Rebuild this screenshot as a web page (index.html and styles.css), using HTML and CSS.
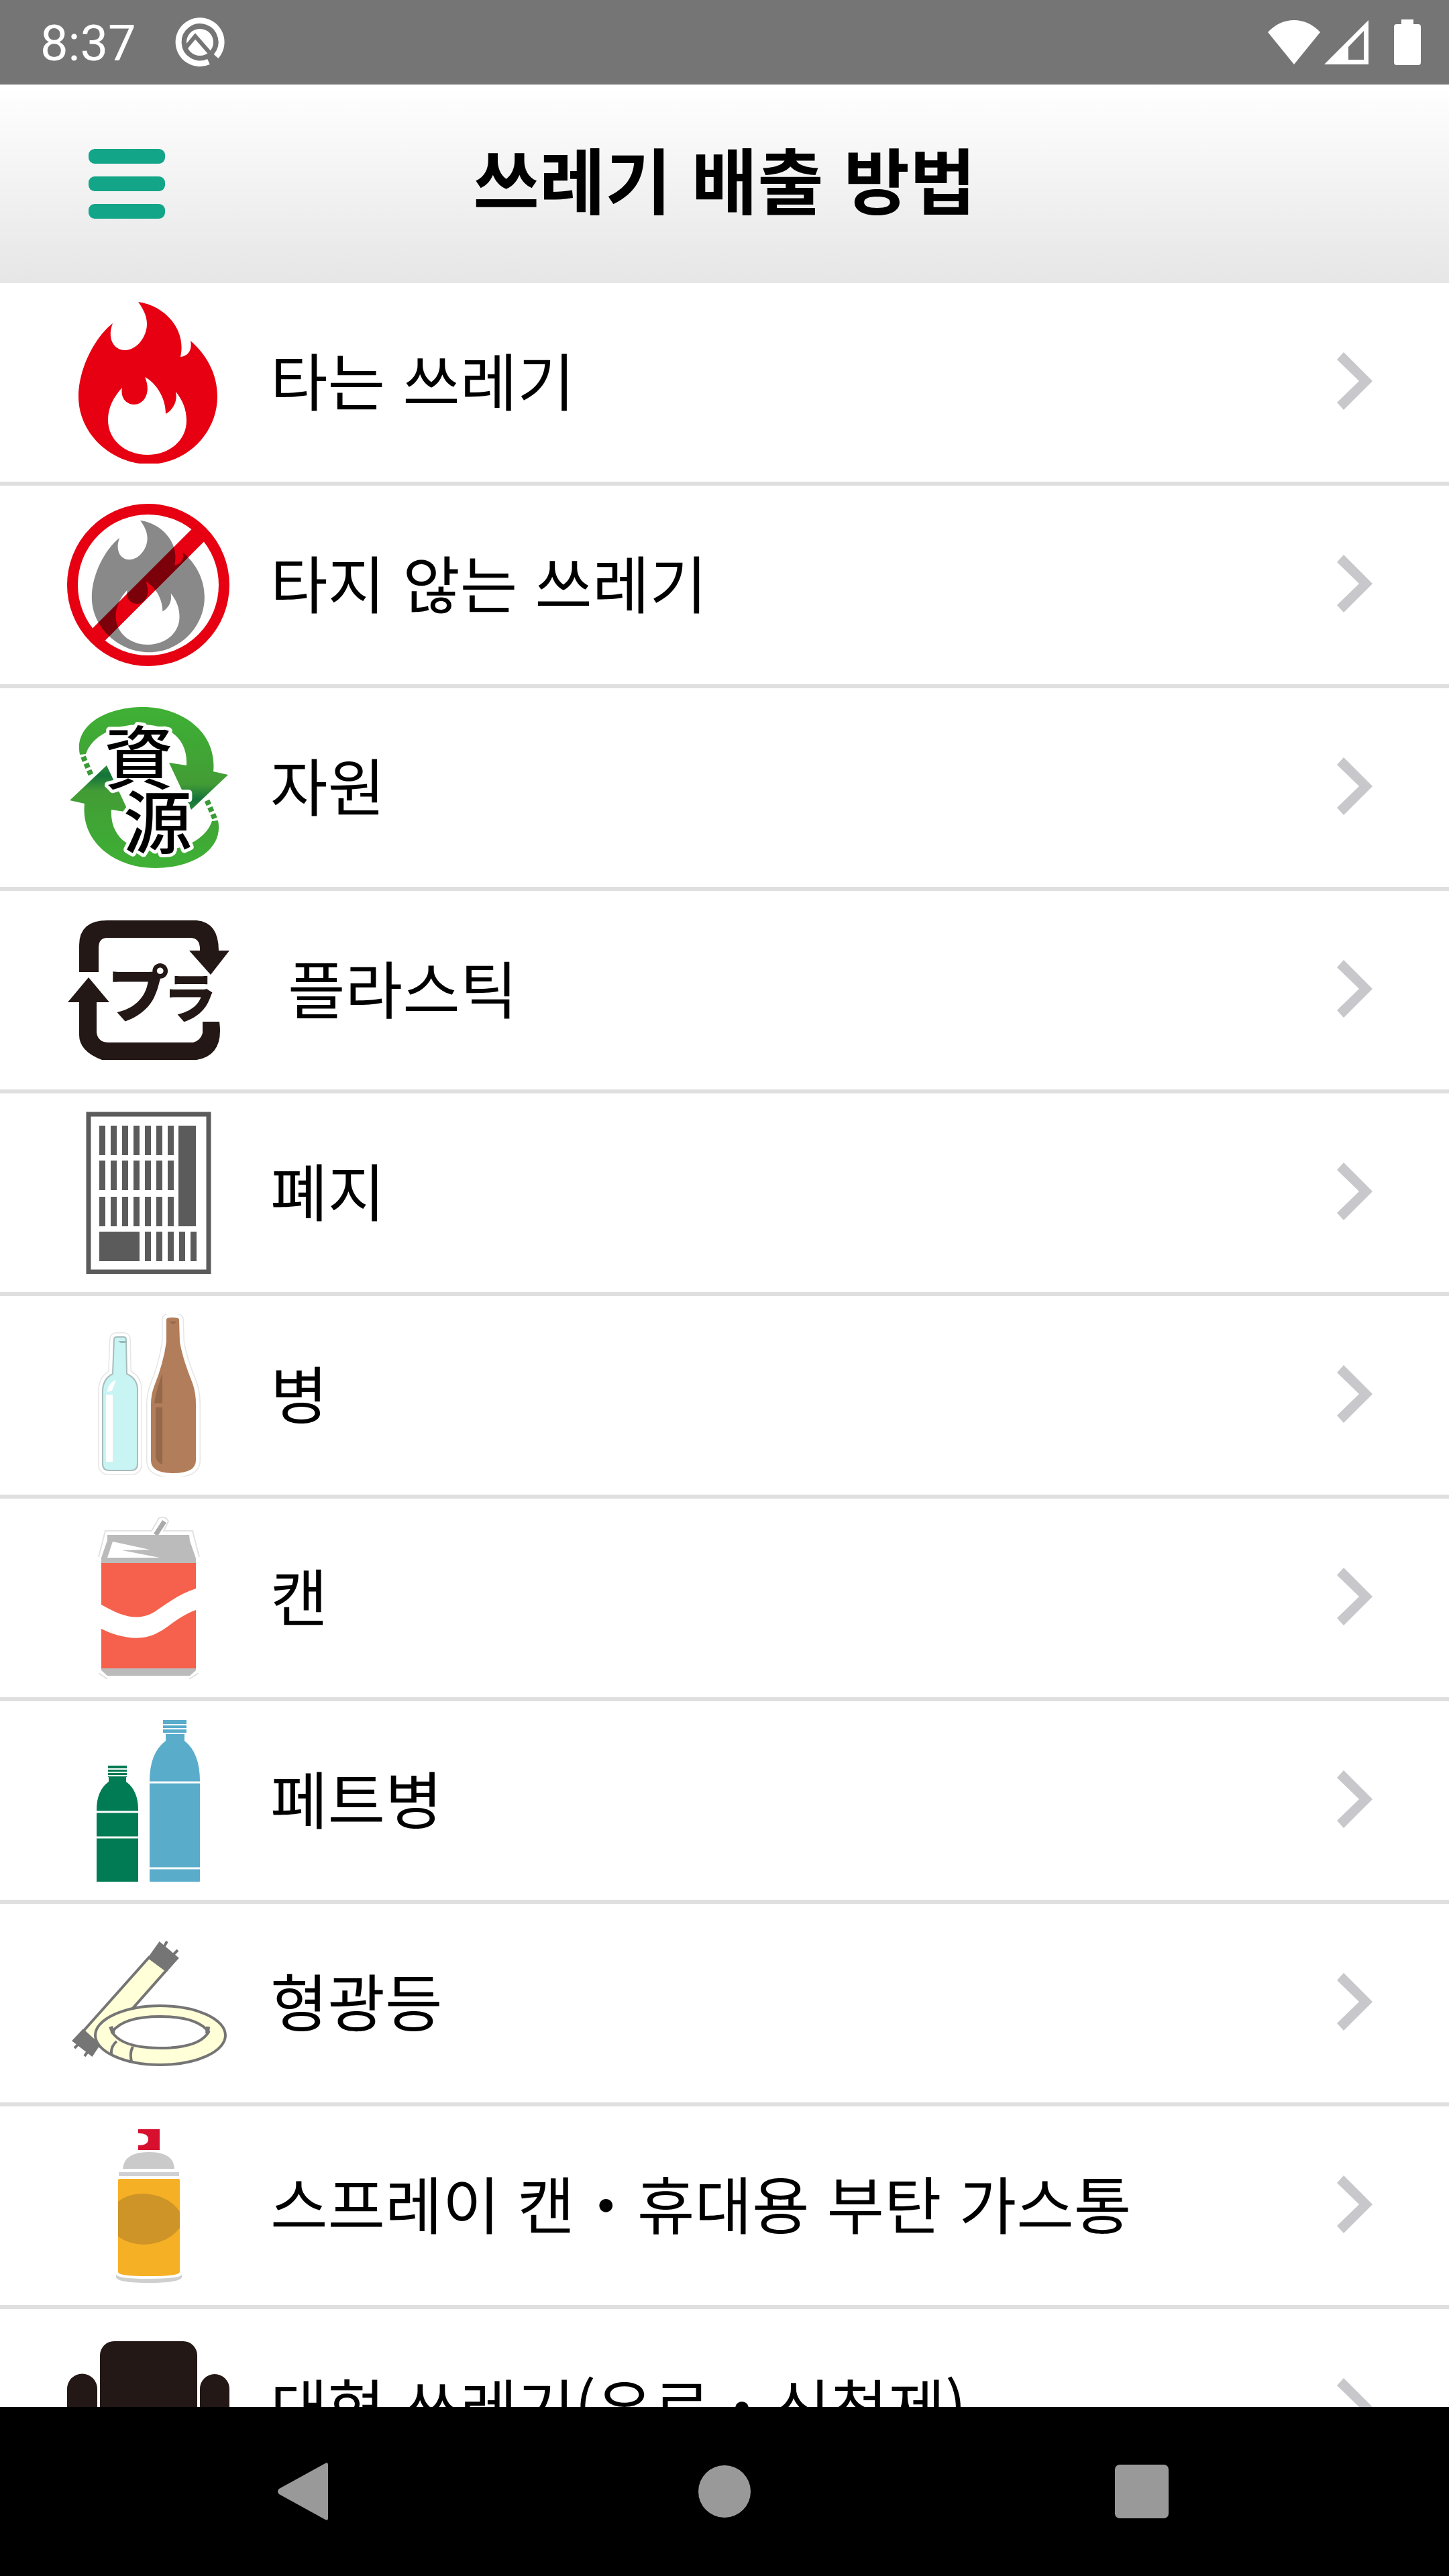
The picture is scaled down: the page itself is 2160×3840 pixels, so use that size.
FILE: index.html
```html
<!DOCTYPE html>
<html lang="ko">

<head>
  <meta charset="UTF-8">
  <meta name="viewport" content="width=device-width, initial-scale=1">
  <title>쓰레기 배출 방법</title>
  <link rel="stylesheet" href="styles.css">
</head>

<body>
  <!-- shared shapes -->
  <svg class="defs" aria-hidden="true">
    <symbol id="chevron" viewBox="0 0 54 86">
      <path d="M10 0L53 43L10 86L0 75L33 43L0 11Z" />
    </symbol>
    <path id="flame" fill-rule="evenodd" d="M106 1C113 11 119 21 119 34C119 53 104 73 86 73C70 73 59 56 68 33C42 53 17 100 17 142C17 199 68 243 122 243C178 243 224 197 224 142C224 108 208 80 184 59C187 73 180 82 169 83C178 43 147 7 106 1Z
      M116 113C131 121 147 142 147 168C158 162 165 149 162 135C172 147 178 161 178 178C178 208 152 229 120 229C87 229 61 207 61 177C61 159 69 143 82 129C79 145 89 154 100 154C115 154 126 136 116 113Z" />
  </svg>

  <div class="app">
    <div class="status-bar">
      <span class="clock">8:37</span>
      <svg class="status-at" viewBox="0 0 76 76">
        <path d="M62 59A32 32 0 1 0 51 67" fill="none" stroke="#fff" stroke-width="9" />
        <circle cx="38" cy="38" r="20" fill="#fff" />
        <path d="M17 46L31 29L59 61" fill="none" stroke="#757575" stroke-width="6" />
      </svg>
      <div class="status-icons">
        <svg class="wifi" viewBox="0 0 78 68">
          <path d="M39 67L0 19C22-5 56-5 78 19Z" fill="#fff" />
        </svg>
        <svg class="signal" viewBox="0 0 66 68">
          <path fill-rule="evenodd" d="M66 1V67H0ZM59 17L36 41V60H59Z" fill="#fff" />
        </svg>
        <svg class="battery" viewBox="0 0 40 68">
          <path d="M11 0H29V7H36Q40 7 40 11V64Q40 68 36 68H4Q0 68 0 64V11Q0 7 4 7H11Z" fill="#fff" />
        </svg>
      </div>
    </div>

    <header class="header">
      <button class="menu-btn" type="button" aria-label="메뉴">
        <span></span>
        <span></span>
        <span></span>
      </button>
      <h1>쓰레기 배출 방법</h1>
    </header>

    <main class="list">
      <a class="row" href="#burnable">
        <svg class="icon" viewBox="0 0 242 242">
          <use href="#flame" fill="#e60012" />
        </svg>
        <span class="label">타는 쓰레기</span>
        <svg class="chevron"><use href="#chevron" /></svg>
      </a>

      <a class="row" href="#non-burnable">
        <svg class="icon" viewBox="0 0 242 242">
          <use href="#flame" fill="#898989" transform="translate(23 24) scale(.812)" />
          <g class="ban" fill="none" stroke="#e60012">
            <circle cx="121" cy="121" r="113" stroke-width="16" />
            <path d="M200 42L42 200" stroke-width="26" />
          </g>
        </svg>
        <span class="label">타지 않는 쓰레기</span>
        <svg class="chevron"><use href="#chevron" /></svg>
      </a>

      <a class="row" href="#resource">
        <svg class="icon" viewBox="0 0 242 242">
          <defs>
            <linearGradient id="leaf" x1="0" y1="0" x2="0" y2="1">
              <stop offset="0" stop-color="#3fb135" />
              <stop offset=".3" stop-color="#3fa935" />
              <stop offset=".75" stop-color="#439c35" />
              <stop offset=".9" stop-color="#13733a" />
              <stop offset="1" stop-color="#2a8a38" />
            </linearGradient>
            <g id="recycle-arrow">
              <path d="M19 72C10 28 58 1 113 1C173 1 224 40 218 97L240 102L185 154L152 84L178 88C180 55 160 27 110 27C68 27 36 46 28 71Z" fill="url(#leaf)" />
              <path d="M24 75L36 103" stroke="#3a9a38" stroke-width="8" stroke-dasharray="7 4" />
            </g>
          </defs>
          <use href="#recycle-arrow" />
          <use href="#recycle-arrow" transform="rotate(180 122 121)" />
          <g class="kanji">
            <text x="107" y="115">資</text>
            <text x="135" y="211">源</text>
          </g>
        </svg>
        <span class="label">자원</span>
        <svg class="chevron"><use href="#chevron" /></svg>
      </a>

      <a class="row" href="#plastic">
        <svg class="icon" viewBox="0 0 242 242" fill="#231815">
          <path d="M18 94V54Q18 17 60 17H193Q226 20 226 62H242L214 98L182 62H198Q199 43 183 43H60Q47 43 47 58V94Z" />
          <path d="M32 102L63 139H44V184Q46 199 62 199H188Q199 196 202 185V168H227Q234 218 193 225H52Q18 212 18 188V139H1Z" />
          <g class="kana">
            <text class="kana-pu" x="60" y="161">プ</text>
            <text class="kana-ra" x="143" y="162">ラ</text>
          </g>
        </svg>
        <span class="label">&nbsp;플라스틱</span>
        <svg class="chevron"><use href="#chevron" /></svg>
      </a>

      <a class="row" href="#paper">
        <svg class="icon" viewBox="0 0 242 242">
          <g fill="none" stroke="#5b5b5b">
            <rect x="32" y="4" width="179" height="235" stroke-width="7" />
            <path d="M48 43H159M48 95H159" stroke-width="44" stroke-dasharray="9 8" />
            <path d="M48 149H159M116 201H193" stroke-width="44" stroke-dasharray="9 8" />
          </g>
          <path d="M166 21H192V171H166ZM48 179H108V223H48Z" fill="#5b5b5b" />
        </svg>
        <span class="label">폐지</span>
        <svg class="chevron"><use href="#chevron" /></svg>
      </a>

      <a class="row" href="#bottle">
        <svg class="icon" viewBox="0 0 242 242">
          <defs>
            <path id="glass-clear" d="M70 38Q70 34 74 34H84Q88 34 88 38L89 89Q105 96 105 113V223Q105 233 95 233H63Q53 233 53 223V113Q54 96 68 89Z" />
            <path id="glass-brown" d="M148 8Q148 5 157 5Q167 5 167 8L168 41Q172 66 187 103Q192 117 192 134V218Q192 237 158 237Q125 237 125 218V134Q125 120 130 107Q144 72 148 41Z" />
          </defs>
          <g fill="#fff" stroke="#e6e6e6" stroke-width="14" stroke-linejoin="round">
            <use href="#glass-clear" />
            <use href="#glass-brown" />
            <g stroke="#fff" stroke-width="11">
              <use href="#glass-clear" />
              <use href="#glass-brown" />
            </g>
          </g>
          <use href="#glass-clear" fill="#c8f4f3" stroke="#a8bcbc" stroke-width="2" />
          <path d="M58 120H68V220H58ZM60 116Q60 104 73 98L67 114Z" fill="#fff" />
          <path d="M76 40H87V43H80Z" fill="#98b8b8" />
          <use href="#glass-brown" fill="#b17d5a" />
          <path d="M142 88V133H130Q133 113 142 88ZM132 139H142V224Q132 220 132 210ZM152 11H164L158 15Z" fill="#946848" />
        </svg>
        <span class="label">병</span>
        <svg class="chevron"><use href="#chevron" /></svg>
      </a>

      <a class="row" href="#can">
        <svg class="icon" viewBox="0 0 242 242">
          <path d="M47 60L57 21H126L137 2Q147-2 151 7L144 21H187L197 60M47 233L60 242M196 233L182 242" fill="none" stroke="#e2e2e2" stroke-width="2" />
          <path d="M132 27L145 7" stroke="#aaa" stroke-width="7" />
          <path d="M60 27H182L183 36L192 62V69H51V61L60 35Z" fill="#bbb" />
          <path d="M68 37L123 49L82 50L138 61H60Z" fill="#fff" />
          <path d="M51 69H192V226H51Z" fill="#f5614c" />
          <path d="M51 131C81 148 104 157 130 142C153 126 170 114 192 107V139C159 151 146 173 119 179C96 184 71 177 51 167Z" fill="#fff" />
          <path d="M51 226H192V229L183 237H60L51 229Z" fill="#bbb" />
        </svg>
        <span class="label">캔</span>
        <svg class="chevron"><use href="#chevron" /></svg>
      </a>

      <a class="row" href="#pet-bottle">
        <svg class="icon" viewBox="0 0 242 242">
          <path d="M61 69H89V86H88V93Q106 106 106 135V241Q106 243 104 243H46Q44 243 44 241V135Q44 106 62 93V86H61Z" fill="#007b53" />
          <path d="M143 1H178V20H175V32Q198 50 198 92V240Q198 243 195 243H126Q123 243 123 240V92Q123 50 147 32V20H143Z" fill="#5aaccb" />
          <g stroke="#fff" stroke-width="2">
            <path d="M60 74H90M60 79H90M60 84H90M143 8H179M143 14H179M143 21H179" />
            <path d="M44 138H106M44 176H106M123 94H198M123 222H198" stroke-width="3" />
          </g>
        </svg>
        <span class="label">페트병</span>
        <svg class="chevron"><use href="#chevron" /></svg>
      </a>

      <a class="row" href="#fluorescent">
        <svg class="icon" viewBox="0 0 242 242">
          <g fill="#ffffd8" stroke="#757575" stroke-width="4">
            <path d="M122 53L148 72L48 185L24 163Z" />
            <path d="M138 32L164 54L148 72L123 53ZM145 36L149 29M159 48L165 42M24 162L47 183L37 198L10 177ZM17 182L11 188M31 193L26 200" fill="#757575" />
            <path fill-rule="evenodd" d="M42 169A97 44 0 0 1 236 169A97 44 0 0 1 42 169ZM67 164Q84 141 139 141Q194 141 211 164Q197 188 139 188Q82 188 67 164Z" />
            <path d="M74 178Q65 185 66 198M98 186Q93 195 96 208" fill="none" />
            <path d="M65 156L69 166M210 156L209 166" fill="none" stroke-width="6" />
          </g>
        </svg>
        <span class="label">형광등</span>
        <svg class="chevron"><use href="#chevron" /></svg>
      </a>

      <a class="row" href="#spray">
        <svg class="icon" viewBox="0 0 242 242">
          <path d="M106 7H138V38H106V31Q121 31 121 22Q121 13 106 13Z" fill="#d7102f" />
          <path d="M83 66Q85 41 122 41Q159 41 160 66Z" fill="#cacaca" />
          <path d="M77 71H167V77H77Z" fill="#cfd0d3" />
          <path d="M76 83Q76 81 78 81H166Q168 81 168 83V220Q167 226 122 226Q77 226 76 220Z" fill="#f6b025" />
          <path d="M76 115Q91 103 114 103Q151 105 168 130V154Q151 177 114 179Q91 178 76 167Z" fill="#cf9427" />
          <path d="M73 223Q73 230 122 230Q171 230 171 223V228Q168 236 122 236Q76 236 73 228Z" fill="#cfcfcf" />
        </svg>
        <span class="label">스프레이 캔・휴대용 부탄 가스통</span>
        <svg class="chevron"><use href="#chevron" /></svg>
      </a>

      <a class="row" href="#bulky">
        <svg class="icon" viewBox="0 0 242 242" fill="#231815">
          <rect x="49" y="21" width="145" height="130" rx="21" />
          <path d="M0 92A22 22 0 0 1 45 92V155H198V92A22 22 0 0 1 242 92V220H0Z" />
        </svg>
        <span class="label">대형 쓰레기(유료・신청제)</span>
        <svg class="chevron"><use href="#chevron" /></svg>
      </a>
    </main>

    <nav class="nav-bar">
      <button type="button" aria-label="뒤로">
        <svg viewBox="0 0 96 96"><path d="M75 6Q79 4 79 8V88Q79 92 75 90L6 52Q2 48 6 44Z" /></svg>
      </button>
      <button type="button" aria-label="홈">
        <svg viewBox="0 0 96 96"><circle cx="48" cy="48" r="39" /></svg>
      </button>
      <button type="button" aria-label="최근 앱">
        <svg viewBox="0 0 96 96"><rect x="8" y="8" width="80" height="80" rx="7" /></svg>
      </button>
    </nav>
  </div>
</body>

</html>
```

FILE: styles.css
```css
* {
  box-sizing: border-box;
}

body {
  margin: 0;
  font-family: "Noto Sans CJK KR", "Noto Sans", sans-serif;
  background: #fff;
  color: #000;
}

button {
  border: none;
  background: none;
  padding: 0;
  cursor: pointer;
}

.defs {
  position: absolute;
  width: 0;
  height: 0;
}

.app {
  display: flex;
  flex-direction: column;
  height: 100vh;
}

/* status bar */
.status-bar {
  display: flex;
  align-items: center;
  flex: none;
  height: 126px;
  padding: 0 42px 0 60px;
  background: #757575;
  color: #fff;
}

.clock {
  padding-top: 4px;
  font-family: Roboto, sans-serif;
  font-size: 74px;
  line-height: 80px;
}

.status-at {
  width: 76px;
  height: 76px;
  margin-left: 57px;
}

.status-icons {
  display: flex;
  margin-left: auto;
}

.wifi {
  width: 78px;
  height: 68px;
}

.signal {
  width: 66px;
  height: 68px;
  margin-left: 6px;
}

.battery {
  width: 40px;
  height: 68px;
  margin-left: 38px;
}

/* header */
.header {
  display: grid;
  grid-template-columns: 246px 1fr 246px;
  align-items: center;
  flex: none;
  height: 296px;
  background: linear-gradient(#fff, #e6e6e6);
}

.menu-btn {
  display: flex;
  flex-direction: column;
  gap: 19px;
  padding-left: 132px;
}

.menu-btn span {
  width: 114px;
  height: 22px;
  border-radius: 9px;
  background: #13a588;
}

h1 {
  margin: 0;
  padding-bottom: 18px;
  font-size: 107px;
  font-weight: 700;
  line-height: 160px;
  text-align: center;
}

/* list */
.list {
  flex: 1;
  min-height: 0;
  overflow-y: auto;
  scrollbar-width: none;
}

.row {
  display: flex;
  align-items: center;
  padding: 27px 113px 27px 100px;
  border-bottom: 6px solid #dfdfdf;
  color: inherit;
  text-decoration: none;
}

.icon {
  flex: none;
  width: 242px;
  height: 242px;
}

.label {
  flex: 1;
  margin-left: 61px;
  padding-bottom: 10px;
  font-size: 93px;
  line-height: 140px;
}

.chevron {
  flex: none;
  width: 54px;
  height: 86px;
  margin-bottom: 4px;
  fill: #c7c7cc;
}

.ban {
  mix-blend-mode: multiply;
}

.kanji {
  font-family: "Noto Sans CJK JP", sans-serif;
  font-size: 102px;
  font-weight: 500;
  text-anchor: middle;
  stroke: #fff;
  stroke-width: 10px;
  stroke-linejoin: round;
  paint-order: stroke;
}

.kana {
  font-family: "Noto Sans CJK JP", sans-serif;
  font-weight: 900;
}

.kana-pu {
  font-size: 92px;
}

.kana-ra {
  font-size: 80px;
}

/* navigation bar */
.nav-bar {
  display: flex;
  justify-content: center;
  flex: none;
  height: 252px;
  background: #000;
}

.nav-bar button {
  display: flex;
  align-items: center;
  justify-content: center;
  width: 28.8%;
}

.nav-bar svg {
  width: 96px;
  height: 96px;
  fill: #999;
}
```
